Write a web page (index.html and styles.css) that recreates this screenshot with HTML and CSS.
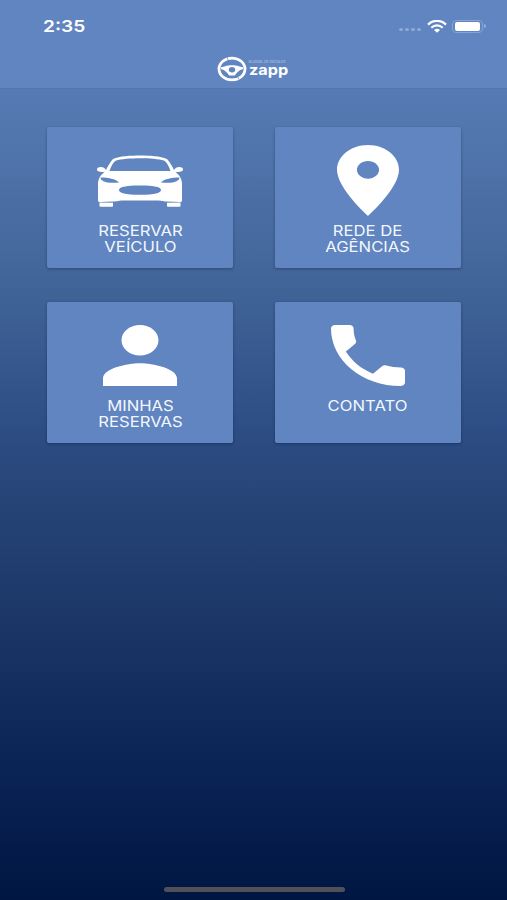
FILE: index.html
```html
<!DOCTYPE html>
<html lang="pt-BR">
<head>
  <meta charset="UTF-8" />
  <meta name="viewport" content="width=device-width, initial-scale=1" />
  <title>Zapp</title>
  <link rel="stylesheet" href="styles.css">
</head>
<body>

<header>
  <div class="status">
    <span class="time">2:35</span>
    <div class="signals">
      <div class="dots"><i></i><i></i><i></i><i></i></div>
      <svg class="wifi" viewBox="0 0 20 13" preserveAspectRatio="none" fill="none" stroke="#fff">
        <path d="M1 4.6C6-.4 14-.4 19 4.6" stroke-width="2.3"/>
        <path d="M4.3 7.700c3.300-3 8.100-3 11.400 0" stroke-width="2.2"/>
        <path d="M7 10c1.800-1.600 4.200-1.600 6 0l-3 2.800z" fill="#fff" stroke="none"/>
      </svg>
      <div class="battery"><span></span></div>
      <i class="cap"></i>
    </div>
  </div>
  <div class="logo">
    <svg class="wheel" viewBox="0 0 30 26" preserveAspectRatio="none">
      <ellipse cx="15" cy="13" rx="13" ry="10.900" fill="none" stroke="#fff" stroke-width="2.800"/>
      <path d="M10 1.200l1.400 3M22 23.500l-1.500-3" stroke="#6085c0" stroke-width=".7"/>
      <path d="M4 11.200c3.500-.4 5-2 11-2s7.500 1.600 11 2v1.800c-4 .8-6 3.500-8.200 6.500h-5.600C10 16.500 8 13.800 4 13z" fill="#fff"/>
      <ellipse cx="15" cy="13.800" rx="3.200" ry="2.700" fill="#6085c0"/>
    </svg>
    <div class="brand">
      <small>ALUGUEL DE VEÍCULOS</small>
      <strong>zapp</strong>
    </div>
  </div>
</header>

<main class="menu">
  <a class="card">
    <svg class="icon car" viewBox="0 0 86 52" preserveAspectRatio="none">
      <path fill="#fff" fill-rule="evenodd" d="M16 4C23 1 33 .5 43 .5S63 1 70 4c3 3 5 7 7 11 1-2 3-3 5-3 3 0 4 1 4 2.500 0 2-3 2.500-7.500 2.500 4 3 6.500 7 6.500 12v16.500c0 1-1 1.500-2 1.500l-13-.5c-5 0-6-1-9-1H25c-3 0-4 1-9 1L3 47c-1 0-2-.5-2-1.500V29c0-5 2.500-9 6.500-12C3 17 0 16.500 0 14.500 0 13 1 12 4 12c2 0 4 1 5 3 2-4 4-8 7-11z
        M19 5.500c-3 2-5 6-6.500 10.500 6 0 13 0 19 0h23c6 0 13 0 19 0C72 11.500 70 7.500 67 5.500c-10-3-38-3-48 0z
        M3.500 22.500c0 4 6 6 18.500 5-2-3-10-5-18.500-5z
        M82.500 22.500c0 4-6 6-18.500 5 2-3 10-5 18.500-5z
        M22 35c0-3 6-4.500 21-4.500S64 32 64 35c0 3-6 4.800-21 4.800S22 38 22 35z"/>
      <path fill="#fff" d="M2.500 47.500l13.500.3V51q0 .8-1 .8H3.500q-1 0-1-.8zM83.500 47.500l-13.500.3V51q0 .8 1 .8h11.500q1 0 1-.8z"/>
    </svg>
    <span class="label">RESERVAR<br>VEÍCULO</span>
  </a>
  <a class="card">
    <svg class="icon pin" viewBox="5 2 14 20" preserveAspectRatio="none" fill="#fff">
      <path d="M12 2C8.130 2 5 5.130 5 9c0 5.250 7 13 7 13s7-7.750 7-13c0-3.870-3.130-7-7-7zm0 9.500c-1.380 0-2.500-1.120-2.500-2.500s1.120-2.500 2.500-2.500 2.500 1.120 2.500 2.500-1.120 2.500-2.500 2.500z"/>
    </svg>
    <span class="label">REDE DE<br>AGÊNCIAS</span>
  </a>
  <a class="card">
    <svg class="icon person" viewBox="4 4 16 16" preserveAspectRatio="none" fill="#fff">
      <path d="M12 12c2.210 0 4-1.790 4-4s-1.790-4-4-4-4 1.790-4 4 1.790 4 4 4zm0 2c-2.670 0-8 1.340-8 4v2h16v-2c0-2.660-5.330-4-8-4z"/>
    </svg>
    <span class="label">MINHAS<br>RESERVAS</span>
  </a>
  <a class="card">
    <svg class="icon phone" viewBox="3 3 18 18" preserveAspectRatio="none" fill="#fff">
      <path d="M6.620 10.790c1.440 2.830 3.760 5.140 6.590 6.590l2.200-2.200c.27-.27.67-.36 1.020-.24 1.120.37 2.330.57 3.570.57.55 0 1 .45 1 1V20c0 .55-.45 1-1 1-9.390 0-17-7.610-17-17 0-.55.45-1 1-1h3.500c.55 0 1 .45 1 1 0 1.250.2 2.450.57 3.570.11.35.03.74-.25 1.020l-2.200 2.200z"/>
    </svg>
    <span class="label">CONTATO</span>
  </a>
</main>

<div class="home-bar"></div>

</body>
</html>
```

FILE: styles.css
```css
* {
  box-sizing: border-box;
}
body {
  font-family: Inter, "Liberation Sans", sans-serif;
  color: #fff;
  margin: 0;
  height: 900px;
  display: flex;
  flex-direction: column;
  align-items: center;
  overflow: hidden;
  background: linear-gradient(#5a80ba 0, #567bb4 10%, #426599 31%, #2d4e86 47%, #29477a 53%, #1a3566 70%, #0b2456 85%, #001642 100%);
}
header {
  width: 100%;
  height: 89px;
  background: #6085c0;
  border-bottom: 1px solid #5176ac;
}
.status {
  display: flex;
  justify-content: space-between;
  height: 52px;
  padding: 0 21px 0 43px;
  align-items: center;
}
.time {
  font-size: 16.5px;
  font-weight: 600;
  transform: scaleX(1.16);
  transform-origin: left;
}
.signals {
  display: flex;
  align-items: center;
}
.dots {
  display: flex;
  gap: 2px;
  margin: 7px 6px 0 0;
}
.dots i {
  width: 4px;
  height: 3px;
  border-radius: 50%;
  background: #8facd9;
}
.wifi {
  width: 20px;
  height: 13px;
}
.battery {
  width: 31px;
  height: 13px;
  margin-left: 5px;
  padding: 1px 2px;
  border: 1px solid #86a4d3;
  border-radius: 4px;
}
.battery span {
  display: block;
  height: 100%;
  border-radius: 2px;
  background: #fff;
}
.cap {
  width: 2px;
  height: 4px;
  margin-left: 1px;
  border-radius: 0 2px 2px 0;
  background: #91addb;
}
.logo {
  display: flex;
  justify-content: center;
  padding: 4px 3px 0 0;
}
.wheel {
  width: 30px;
  height: 26px;
}
.brand {
  width: 41px;
  padding: 4px 0 0 2px;
  white-space: nowrap;
}
.brand small {
  display: block;
  font-size: 3.2px;
  line-height: 4px;
  color: #c1d2ec;
}
.brand strong {
  display: block;
  font-size: 14px;
  font-weight: 700;
  line-height: 12px;
  transform: scaleX(1.16);
  transform-origin: left;
}
.menu {
  display: grid;
  grid-template-columns: 186px 186px;
  grid-auto-rows: 141px;
  gap: 34px 42px;
  padding: 38px 0 0 1px;
}
.card {
  display: flex;
  flex-direction: column;
  align-items: center;
  background: #6085c0;
  border-radius: 2px;
  box-shadow: 0 1px 3px rgba(0,15,50,0.35);
}
.icon {
  flex: none;
}
.car {
  width: 86px;
  height: 52px;
  margin: 28px 0 16px;
}
.pin {
  width: 62px;
  height: 71px;
  margin: 18px 0 7px;
}
.person, .phone {
  width: 74px;
  height: 61px;
  margin: 23px 0 12px;
}
.label {
  font-size: 14px;
  line-height: 16px;
  text-align: center;
  color: #f3f7fd;
  transform: scaleX(1.19);
}
.home-bar {
  width: 181px;
  height: 5px;
  margin: auto 0 8px 1px;
  border-radius: 3px;
  background: #505158;
}
```
